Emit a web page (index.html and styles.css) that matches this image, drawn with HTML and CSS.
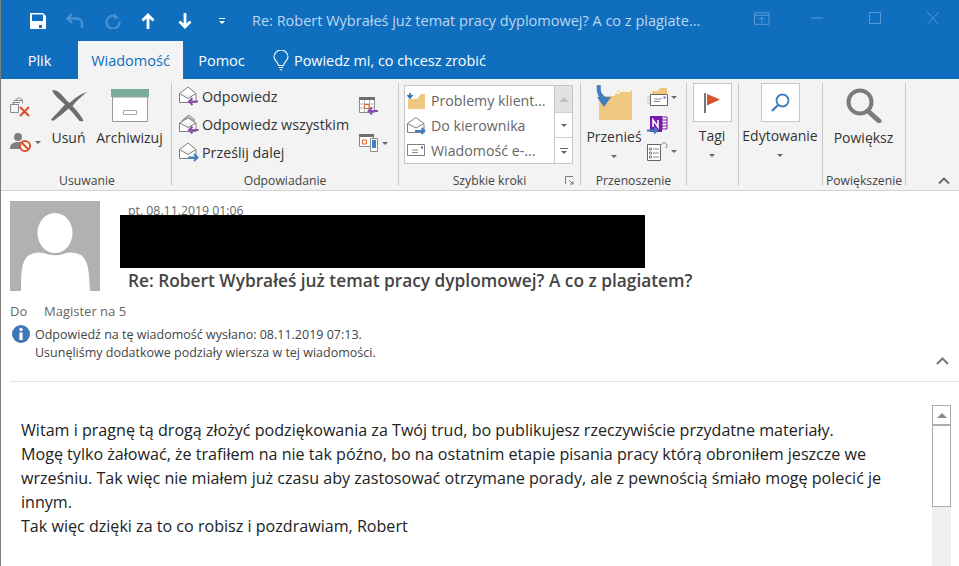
FILE: index.html
```html
<!DOCTYPE html>
<html lang="pl">
<head>
<meta charset="utf-8">
<title>Re: Robert</title>
<link rel="stylesheet" href="styles.css">
</head>
<body>
<div class="window">
  <header class="titlebar">
    <div class="qat">
      <svg class="q-save" width="16" height="16" viewBox="0 0 16 16"><path d="M0 0h13l3 3v13H0z" fill="#fff"/><path d="M2 1.500h11v6.500H2z" fill="#106ebe"/><path d="M9 12h3v3H9z" fill="#106ebe"/></svg>
      <svg class="q-undo" width="18" height="16" viewBox="0 0 18 16"><path d="M6 1 1.500 5.500 6 10M2 5.500h9a5 5 0 0 1 5 5V15" fill="none" stroke="#4a90cf" stroke-width="2.400"/></svg>
      <svg class="q-redo" width="16" height="16" viewBox="0 0 16 16"><path d="M10.500 2.200A6.500 6.500 0 1 0 14.500 8" fill="none" stroke="#4a90cf" stroke-width="2.400" transform="translate(0 1)"/><path d="M9 0v6l5-1z" fill="#4a90cf"/></svg>
      <svg class="q-up" width="14" height="16" viewBox="0 0 14 16"><path d="M7 16V2M1.500 7.500 7 2l5.500 5.500" fill="none" stroke="#fff" stroke-width="2.800"/></svg>
      <svg class="q-down" width="14" height="16" viewBox="0 0 14 16"><path d="M7 0v14M1.500 8.500 7 14l5.500-5.500" fill="none" stroke="#fff" stroke-width="2.800"/></svg>
      <svg class="q-more" width="8" height="8" viewBox="0 0 8 8"><path d="M1 1h6v1H1zM1 4h6L4 7z" fill="#fff"/></svg>
    </div>
    <div class="doc-title">Re: Robert Wybrałeś już temat pracy dyplomowej? A co z plagiate...</div>
    <div class="win-btns">
      <svg width="18" height="13" viewBox="0 0 18 13"><path d="M.500.500h14.500v11.500H.500zM.500 3h14.500M7.750 11V5M5 7.500l2.750-2.750 2.750 2.750" transform="translate(1 .3)" fill="none" stroke="#5a9ad4"/></svg>
      <svg width="12" height="13" viewBox="0 0 12 13"><path d="M0 6h12" stroke="#5a9ad4"/></svg>
      <svg width="12" height="13" viewBox="0 0 12 13"><path d="M.500.500h11v11H.500z" fill="none" stroke="#5a9ad4"/></svg>
      <svg width="12" height="13" viewBox="0 0 12 13"><path d="M0 0l12 12.500M12 0 0 12.500" fill="none" stroke="#5a9ad4"/></svg>
    </div>
  </header>

  <nav class="tabs">
    <span class="tab tab-file">Plik</span>
    <span class="tab tab-active">Wiadomość</span>
    <span class="tab tab-help">Pomoc</span>
    <span class="tell">
      <svg width="16" height="21" viewBox="0 0 16 21"><path d="M5.500 15.500C5 12 1 10.500 1 7a7 7 0 0 1 14 0c0 3.500-4 5-4.500 8.500zM5.800 17.500h4.400M6.800 19.700h2.400" fill="none" stroke="#fff" stroke-width="1.100"/></svg>
      Powiedz mi, co chcesz zrobić
    </span>
  </nav>

  <section class="ribbon">
    <div class="group g-delete">
      <div class="g-body">
        <div class="small-col">
          <svg width="21" height="22" viewBox="0 0 21 22"><path d="M5 4.500 9 1.500l4 3M3.500 4.500h9v3M2 6.500h8M.5 8.500h8v8h-8zM3.500 6.500v2" fill="none" stroke="#8a8a8a"/><path d="M10 11l9 9M19 11l-9 9" stroke="#d9512c" stroke-width="2.200"/></svg>
          <span class="with-caret">
            <svg width="22" height="20" viewBox="0 0 22 20"><circle cx="8" cy="5" r="4" fill="#7f7f7f"/><path d="M0 17c0-5 3-7 8-7s6 2 7 3v4z" fill="#7f7f7f"/><circle cx="15" cy="14" r="5" fill="#fff" stroke="#d9512c" stroke-width="2"/><path d="M11.500 10.500l7 7" stroke="#d9512c" stroke-width="2"/></svg>
            <i class="caret"></i>
          </span>
        </div>
        <div class="big big-del">
          <svg width="38" height="33" viewBox="0 0 38 33"><path d="M2 1.500C5 .5 8 2 11 5c3 3 6 7 8.500 9C24 10 30 5 37 3c-5 4-11 9-14.500 14 4 4 8 9 11 14.500-1 1-3 1-4 .5-4-5-7-9-11-12.500C15 23 9 28 3 32l-2-1.500C6 25 11 20 15 15.500 10 11 5 7 2 1.500z" fill="#6d6d6d"/></svg>
          <span class="big-label">Usuń</span>
        </div>
        <div class="big big-arch">
          <svg width="38" height="33" viewBox="0 0 38 33"><path d="M1.500 8h35v24.500h-35z" fill="#fff" stroke="#9a9a9a"/><path d="M0 0h38v8H0z" fill="#7aab98"/><path d="M12.500 21.500h13v4h-13z" fill="#fff" stroke="#a8a8a8"/></svg>
          <span class="big-label">Archiwizuj</span>
        </div>
      </div>
      <div class="g-label">Usuwanie</div>
    </div>

    <div class="group g-reply">
      <div class="g-body">
        <div class="reply-list">
          <div class="reply-row"><svg width="20" height="20" viewBox="0 0 20 20"><path d="M.5 7.500 9 1l8 6.500v9H.5zM.5 7.500 9 12.500l8-5" fill="#fff" stroke="#7f7f7f"/><path d="M19 15.500H10M13.500 12 10 15.500l3.500 3.500" fill="none" stroke="#8a4fae" stroke-width="2"/></svg>Odpowiedz</div>
          <div class="reply-row"><svg width="20" height="20" viewBox="0 0 20 20"><path d="M3.500 6 10 1l6 5M2 7.500 9 2.500l7 5" fill="none" stroke="#8a8a8a"/><path d="M.5 9 9 4l8 5v8.500H.5zM.5 9 9 13.500 17 9" fill="#fff" stroke="#7f7f7f"/><path d="M19.500 16H10M13.500 12.500 10 16l3.500 3.500" fill="none" stroke="#8a4fae" stroke-width="2"/></svg>Odpowiedz wszystkim</div>
          <div class="reply-row"><svg width="20" height="20" viewBox="0 0 20 20"><path d="M.5 7.500 9 1l8 6.500v9H.5zM.5 7.500 9 12.500l8-5" fill="#fff" stroke="#7f7f7f"/><path d="M9 15.500h9M15 12l3.500 3.500L15 19" fill="none" stroke="#3f7fbf" stroke-width="2"/></svg>Prześlij dalej</div>
        </div>
        <div class="reply-side">
          <svg width="20" height="18" viewBox="0 0 20 18"><path d="M.500 2.500h15v13H.500z" fill="#fff" stroke="#8a8a8a"/><path d="M0 0h16v3H0z" fill="#6f6f6f"/><path d="M.500 7h15M.500 11h15M5.500 3v12M10.500 3v12" stroke="#b0b0b0"/><path d="M5.500 7.500h4.500v4H5.500z" fill="#fff" stroke="#d9622c"/><path d="M19 14h-9M13 10.500 9.500 14l3.500 3.500" fill="none" stroke="#8a4fae" stroke-width="2"/></svg>
          <span class="with-caret">
            <svg width="20" height="18" viewBox="0 0 20 18"><path d="M.500 2.500h14v10H.500z" fill="#fff" stroke="#8a8a8a"/><path d="M0 0h15v3H0z" fill="#6f6f6f"/><path d="M3.500 6h4v4h-4z" fill="#fff" stroke="#d9622c"/><path d="M11.500 4.500h7v13h-7z" fill="#fff" stroke="#8a8a8a"/><path d="M13 6h4v8h-4z" fill="#3f7fbf"/></svg>
            <i class="caret"></i>
          </span>
        </div>
      </div>
      <div class="g-label">Odpowiadanie</div>
    </div>

    <div class="group g-quick">
      <div class="g-body">
        <div class="gallery">
          <div class="gal-items">
            <div class="gal-row"><svg width="19" height="18" viewBox="0 0 19 18"><path d="M1 17V7h9l4-5h4v15z" fill="#eec87f"/><path d="M3 1v3.500M.5 3 3 6l2.500-3" fill="none" stroke="#2f6fad" stroke-width="1.600"/></svg>Problemy klient...</div>
            <div class="gal-row"><svg width="19" height="18" viewBox="0 0 19 18"><path d="M.5 6.500 9 .5l8 6v9H.5zM.5 6.500 9 11l8-4.500" fill="#fff" stroke="#7f7f7f"/><path d="M8 14h9.500M14.500 11l3 3-3 3" fill="none" stroke="#3f7fbf" stroke-width="2"/></svg>Do kierownika</div>
            <div class="gal-row"><svg width="19" height="14" viewBox="0 0 19 14"><path d="M.5.500h17v11H.5z" fill="#fff" stroke="#7f7f7f"/><path d="M5 6h6M5 8.500h6" stroke="#8a8a8a"/><path d="M14 2.500h2v2h-2z" fill="#2f6fad"/></svg>Wiadomość e-...</div>
          </div>
          <div class="gal-scroll">
            <span class="gal-btn gal-up"><i class="tri-up"></i></span>
            <span class="gal-btn"><i class="caret"></i></span>
            <span class="gal-btn gal-more"><i class="bar"></i><i class="caret"></i></span>
          </div>
        </div>
      </div>
      <div class="g-label">Szybkie kroki
        <svg class="launcher" width="9" height="9" viewBox="0 0 9 9"><path d="M.5 8V.5H8M4 4l4 4M8 5v3H5" fill="none" stroke="#7a7a7a"/></svg>
      </div>
    </div>

    <div class="group g-move">
      <div class="g-body">
        <div class="big big-move">
          <svg width="38" height="35" viewBox="0 0 38 35"><path d="M4 35V11h15l5-6h13v30z" fill="#eec87f"/><path d="M22 9l3.500-3H36" fill="none" stroke="#fff" stroke-width="1.500"/><path d="M4 0c-1 6 1 11 5 13" fill="none" stroke="#3f7fbf" stroke-width="4"/><path d="M2 12l14 0-7 10z" fill="#3f7fbf"/></svg>
          <span class="big-label">Przenieś</span>
          <i class="caret"></i>
        </div>
        <div class="small-col move-col">
          <span class="with-caret"><svg width="21" height="19" viewBox="0 0 21 19"><path d="M5 7V3h6l2-3h7v7z" fill="#eec87f"/><path d="M3.500 6.500h17v11h-17z" fill="#fff" stroke="#666"/><path d="M7 11h8M7 13.500h6" stroke="#8a8a8a"/><path d="M16.500 8.500h2v2h-2z" fill="#2f6fad"/><path d="M0 9h3M0 12h3M0 15h3" stroke="#bbb"/></svg><i class="caret"></i></span>
          <span class="with-caret"><svg width="21" height="19" viewBox="0 0 21 19"><path d="M3 1h12v16H3z" fill="#7719aa"/><path d="M15 2h5v12h-5z" fill="#fff" stroke="#7719aa"/><path d="M15 5h5M15 8h5M15 11h5" stroke="#7719aa"/><path d="M6 12V5l5 7V5" fill="none" stroke="#fff" stroke-width="1.600"/><path d="M0 15.500h10M7 12.500l3 3-3 3" fill="none" stroke="#3f7fbf" stroke-width="2"/></svg><i class="hidden-caret"></i></span>
          <span class="with-caret"><svg width="21" height="19" viewBox="0 0 21 19"><path d="M.5 2.500h13v16H.5z" fill="#fff" stroke="#666"/><path d="M6 7h6M6 11h6M6 15h6" stroke="#8a8a8a"/><path d="M2.500 6h2v2h-2zM2.500 10h2v2h-2zM2.500 14h2v2h-2z" fill="none" stroke="#6a6a6a" stroke-width=".8"/><path d="M13.500 4c1-3 4-4 6-2 1 1 .5 3-.5 4" fill="none" stroke="#8a8a8a"/></svg><i class="caret"></i></span>
        </div>
      </div>
      <div class="g-label">Przenoszenie</div>
    </div>

    <div class="group g-tags">
      <div class="g-body">
        <div class="big big-box">
          <span class="tile"><svg width="16" height="20" viewBox="0 0 16 20"><path d="M1 0v20" stroke="#777" stroke-width="2"/><path d="M3 1l13 5.500-13 6z" fill="#d9512c"/></svg></span>
          <span class="big-label">Tagi</span>
          <i class="caret"></i>
        </div>
      </div>
      <div class="g-label"></div>
    </div>

    <div class="group g-edit">
      <div class="g-body">
        <div class="big big-box">
          <span class="tile"><svg width="19" height="19" viewBox="0 0 19 19"><circle cx="11.500" cy="7.500" r="6" fill="none" stroke="#3f7fbf" stroke-width="1.800"/><path d="M7 12 1 18" stroke="#3f7fbf" stroke-width="2.400"/></svg></span>
          <span class="big-label">Edytowanie</span>
          <i class="caret"></i>
        </div>
      </div>
      <div class="g-label"></div>
    </div>

    <div class="group g-zoom">
      <div class="g-body">
        <div class="big big-zoom">
          <svg width="36" height="35" viewBox="0 0 36 35"><circle cx="14" cy="14" r="11.500" fill="none" stroke="#7b7b7b" stroke-width="4"/><path d="M22 23 33 33" stroke="#7b7b7b" stroke-width="5" stroke-linecap="round"/></svg>
          <span class="big-label">Powiększ</span>
        </div>
      </div>
      <div class="g-label">Powiększenie</div>
    </div>

    <div class="ribbon-end">
      <svg width="12" height="7" viewBox="0 0 12 7"><path d="M1 6.500 6 1.500l5 5" fill="none" stroke="#666" stroke-width="1.800"/></svg>
    </div>
  </section>

  <main class="reading">
    <div class="msg-head">
      <div class="avatar">
        <svg width="90" height="90" viewBox="0 0 90 90"><path d="M0 0h90v90H0z" fill="#b1b1b1"/><ellipse cx="45" cy="32" rx="17.500" ry="20" fill="#fff"/><path d="M11 90c0-18 0-30 8-36 6-3 11-3 15-2 7 3 15 3 22 0 4-1 9-1 15 2 8 6 8 18 9 36z" fill="#fff"/></svg>
      </div>
      <div class="head-meta">
        <div class="date">pt. 08.11.2019 01:06</div>
        <div class="subject">Re: Robert Wybrałeś już temat pracy dyplomowej? A co z plagiatem?</div>
        <div class="redacted"></div>
      </div>
    </div>
    <div class="to-row"><span class="to-label">Do</span><span class="to-name">Magister na 5</span></div>
    <div class="info-row">
      <svg width="18" height="18" viewBox="0 0 18 18"><circle cx="9" cy="9" r="9" fill="#3f76b5"/><circle cx="9" cy="4.500" r="1.700" fill="#fff"/><path d="M7.400 7.500h3.200v7.500H7.400z" fill="#fff"/></svg>
      <div class="info-text">Odpowiedź na tę wiadomość wysłano: 08.11.2019 07:13.<br>Usunęliśmy dodatkowe podziały wiersza w tej wiadomości.</div>
    </div>
    <div class="collapse-row"><svg width="13" height="8" viewBox="0 0 13 8"><path d="M1 7l5.500-5.500L12 7" fill="none" stroke="#777" stroke-width="2"/></svg></div>
    <div class="msg-wrap">
      <div class="msg-body">
        <p>Witam i pragnę tą drogą złożyć podziękowania za Twój trud, bo publikujesz rzeczywiście przydatne materiały.</p>
        <p>Mogę tylko żałować, że trafiłem na nie tak późno, bo na ostatnim etapie pisania pracy którą obroniłem jeszcze we<br>wrześniu. Tak więc nie miałem już czasu aby zastosować otrzymane porady, ale z pewnością śmiało mogę polecić je<br>innym.</p>
        <p>Tak więc dzięki za to co robisz i pozdrawiam, Robert</p>
      </div>
      <div class="scrollbar">
        <span class="sb-up"><i class="tri-up"></i></span>
        <span class="sb-thumb"></span>
      </div>
    </div>
  </main>
</div>
</body>
</html>
```
FILE: styles.css
```css
* { box-sizing: border-box; }
html, body { margin: 0; padding: 0; height: 100%; overflow: hidden; background: #fff; }
body { font-family: "Open Sans", "Liberation Sans", sans-serif; color: #444; }
svg { display: block; flex: none; }
i { display: block; }

.window { height: 566px; border-left: 1px solid #7c7c7c; display: flex; flex-direction: column; }

.titlebar { height: 41px; background: #106ebe; display: flex; align-items: center; padding-left: 29px; flex: none; }
.qat { display: flex; align-items: center; width: 222px; }
.q-undo { margin-left: 20px; }
.q-redo { margin-left: 21px; }
.q-up { margin-left: 20px; }
.q-down { margin-left: 23px; }
.q-more { margin-left: 26px; }
.doc-title { color: #bcd7f0; font-size: 14.500px; width: 501px; white-space: nowrap; }
.win-btns { display: flex; align-items: center; margin-top: -4px; }
.win-btns svg:nth-child(2) { margin-left: 40px; }
.win-btns svg:nth-child(3) { margin-left: 46px; }
.win-btns svg:nth-child(4) { margin-left: 46px; }

.tabs { height: 38px; background: #106ebe; display: flex; align-items: stretch; flex: none; color: #fff; font-size: 14.500px; }
.tab { display: flex; align-items: center; justify-content: center; }
.tab-file { width: 77px; }
.tab-active { width: 105px; background: #f3f3f3; color: #106ebe; margin-right: 1px; }
.tab-help { width: 75px; }
.tell { display: flex; align-items: center; gap: 5px; margin-left: 14px; font-size: 14.400px; }

.ribbon { height: 112px; background: #f3f3f3; border-bottom: 1px solid #d2d2d2; display: flex; padding: 4px 0 1px 2px; flex: none; color: #333; font-size: 14px; }
.group { border-right: 1px solid #c8c8c8; display: flex; flex-direction: column; flex: none; height: 103px; }
.g-body { flex: 1; display: flex; min-height: 0; }
.g-label { height: 17px; font-size: 12.200px; line-height: 17px; text-align: center; color: #444; position: relative; white-space: nowrap; top: 3px; }
.g-delete { width: 169px; }
.g-reply { width: 227px; }
.g-quick { width: 182px; }
.g-move { width: 106px; }
.g-tags { width: 52px; }
.g-edit { width: 84px; }
.g-zoom { width: 83px; }
.ribbon-end { flex: 1; display: flex; justify-content: flex-end; align-items: flex-end; padding: 0 9px 5px 0; }

.small-col { display: flex; flex-direction: column; }
.with-caret { display: flex; align-items: center; gap: 3px; }
.caret { width: 0; height: 0; border-left: 3.500px solid transparent; border-right: 3.500px solid transparent; border-top: 3.500px solid #666; }
.tri-up { width: 0; height: 0; border-left: 5px solid transparent; border-right: 5px solid transparent; border-bottom: 5px solid #8a8a8a; }
.hidden-caret { width: 7px; }
.big { display: flex; flex-direction: column; align-items: center; }
.big-label { white-space: nowrap; line-height: 20px; }

.g-delete .g-body { padding: 6px 0 0 7px; }
.g-delete .small-col { padding-top: 7px; gap: 14px; width: 35px; }
.big-del { width: 47px; }
.big-del svg, .big-arch svg { margin-bottom: 6px; }
.big-arch { margin-left: 3px; width: 69px; }

.g-reply .g-body { padding: 0 0 0 7px; }
.reply-list { width: 180px; margin-top: -1px; }
.reply-row { height: 28px; display: flex; align-items: center; gap: 3px; font-size: 14.300px; white-space: nowrap; }
.reply-side { padding-top: 14px; display: flex; flex-direction: column; gap: 19px; }

.g-quick .g-body { padding: 2px 0 0 5px; }
.gallery { width: 169px; height: 79px; background: #fff; border: 1px solid #c6c6c6; display: flex; }
.gal-items { flex: 1; color: #666; padding-top: 2px; }
.gal-row { height: 25px; display: flex; align-items: center; gap: 5px; padding-left: 2px; font-size: 14.200px; white-space: nowrap; }
.gal-scroll { width: 18px; border-left: 1px solid #c6c6c6; display: flex; flex-direction: column; }
.gal-btn { height: 25px; display: flex; flex-direction: column; gap: 2px; align-items: center; justify-content: center; border-bottom: 1px solid #d0d0d0; }
.gal-up { background: #e2e2e2; height: 27px; }
.gal-up .tri-up { border-bottom-color: #c0c0c0; }
.gal-more { border-bottom: 0; }
.bar { width: 8px; height: 1px; background: #666; }
.launcher { position: absolute; right: 6px; top: 4px; }

.g-move .g-body { padding: 2px 0 0 6px; }
.big-move { width: 54px; }
.big-move .big-label { margin-top: 7px; }
.big-move .caret { margin-top: 8px; }
.move-col { margin-left: 6px; gap: 8px; padding-top: 3px; }

.big-box { width: 100%; padding-right: 1px; }
.tile { width: 39px; height: 39px; background: #fff; border: 1px solid #c6c6c6; display: flex; align-items: center; justify-content: center; }
.big-box .big-label { margin-top: 4px; }
.big-box .caret { margin-top: 8px; }

.big-zoom { width: 100%; padding: 5px 1px 0 0; }
.big-zoom .big-label { margin-top: 5px; }

.reading { flex: 1; min-height: 0; display: flex; flex-direction: column; color: #555; font-size: 12px; }
.msg-head { display: flex; padding: 10px 0 0 9px; height: 100px; }
.avatar { width: 90px; height: 90px; }
.head-meta { position: relative; padding-left: 28px; flex: 1; }
.date { height: 68px; font-size: 12.300px; line-height: 20px; color: #666; }
.subject { font-size: 17.300px; font-weight: 600; color: #444; line-height: 24px; white-space: nowrap; }
.redacted { position: absolute; left: 20px; top: 14px; width: 525px; height: 53px; background: #000; }
.to-row { display: flex; padding-left: 9px; height: 24px; align-items: center; margin-top: 8px; color: #666; font-size: 13px; }
.to-label { width: 34px; }
.info-row { display: flex; gap: 5px; padding: 2px 0 0 11px; color: #444; }
.info-text { line-height: 18px; font-size: 12.500px; margin-top: 1px; }
.collapse-row { display: flex; justify-content: flex-end; padding-right: 10px; height: 19px; align-items: center; margin-top: -11px; }
.msg-wrap { flex: 1; min-height: 0; margin-left: 9px; margin-top: 11px; border-top: 1px solid #e2e2e2; display: flex; padding-top: 23px; position: relative; }
.msg-body { flex: 1; padding: 13px 0 0 11px; color: #222; font-size: 16.100px; line-height: 24px; white-space: nowrap; }
.msg-body p { margin: 0; }
.scrollbar { width: 19px; margin-right: 8px; background: #f0f0f0; display: flex; flex-direction: column; }
.sb-up { height: 20px; background: #fff; border: 1px solid #ababab; display: flex; align-items: center; justify-content: center; }
.sb-thumb { height: 82px; background: #fff; border: 1px solid #ababab; }
```
